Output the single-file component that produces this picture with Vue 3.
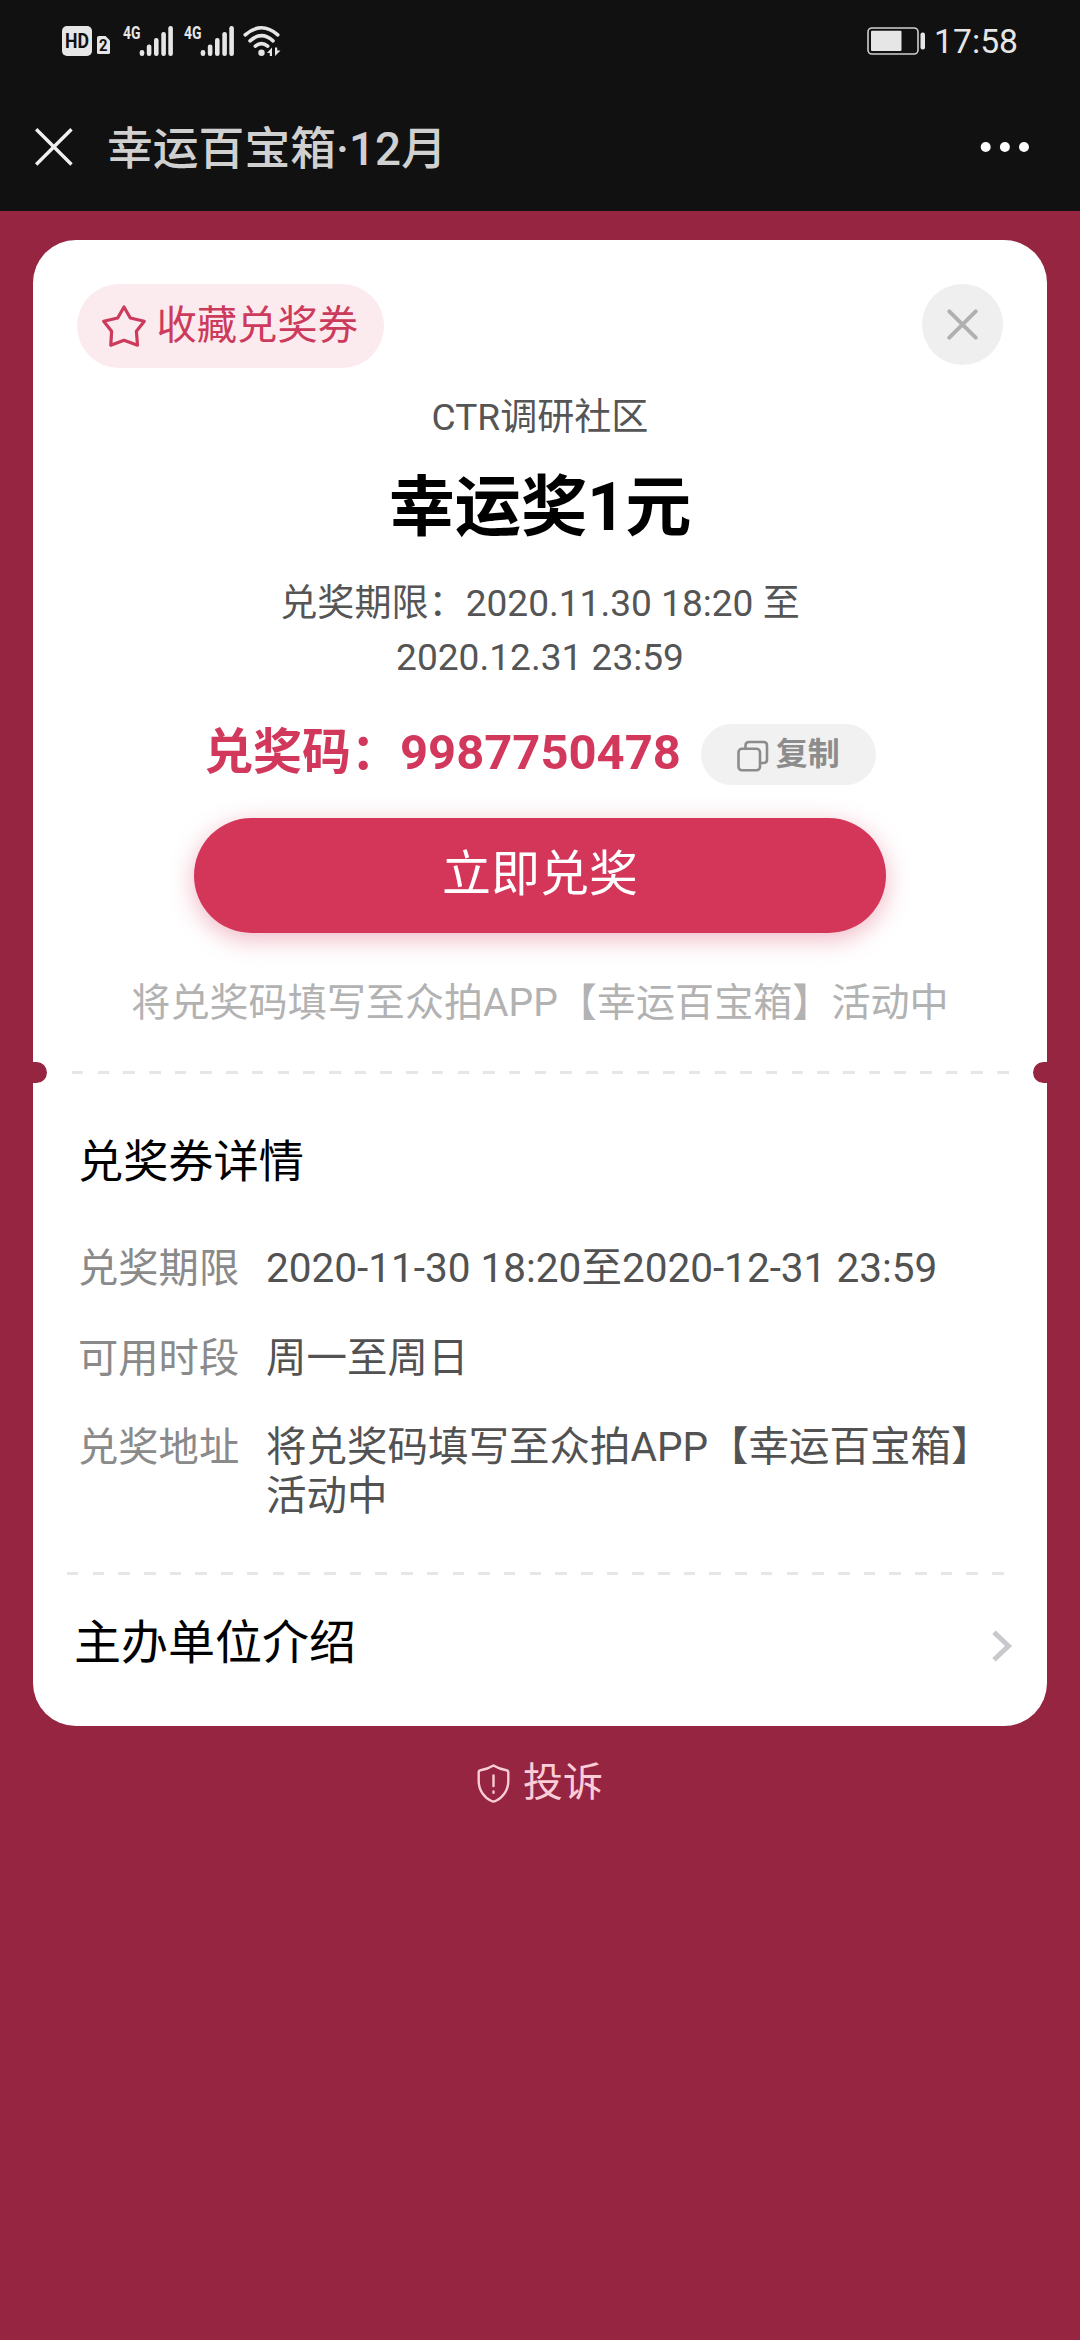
<script setup>
const bars = [
  { x: 2.7, top: 25 },
  { x: 9.8, top: 19.5 },
  { x: 17, top: 13 },
  { x: 24.3, top: 7 },
  { x: 31.3, top: 1 },
]

const details = [
  { label: '兑奖期限', value: '2020-11-30 18:20至2020-12-31 23:59' },
  { label: '可用时段', value: '周一至周日' },
  { label: '兑奖地址', value: '将兑奖码填写至众拍APP【幸运百宝箱】活动中' },
]
</script>

<template>
  <div class="page" lang="zh-CN">
    <header class="top">
      <div class="status">
        <div class="status-left">
          <svg class="hd" width="49" height="40" viewBox="0 -8 49 40">
            <rect x="0" y="1" width="30" height="30" rx="5" fill="#e6e6e6" />
            <text x="3" y="23" textLength="24" lengthAdjust="spacingAndGlyphs" font-size="19.5" font-weight="700" fill="#111">HD</text>
            <path d="M37 11H43.5L48 15.5V27.5Q48 29 46.5 29H36.5Q35 29 35 27.5V13Q35 11 37 11Z" fill="#e6e6e6" />
            <text x="37" y="26.2" textLength="8.5" lengthAdjust="spacingAndGlyphs" font-size="16" font-weight="700" fill="#111">2</text>
          </svg>
          <svg v-for="n in 2" :key="n" class="signal" width="51" height="40" viewBox="0 -8 51 40">
            <text x="0" y="13.6" textLength="17.5" lengthAdjust="spacingAndGlyphs" font-size="18.5" font-weight="700" fill="#e6e6e6">4G</text>
            <rect v-for="b in bars" :key="b.x" :x="b.x + 14" :y="b.top" width="4.6" :height="31 - b.top" rx="2.2" fill="#e6e6e6" />
          </svg>
          <svg class="wifi" width="38" height="40" viewBox="0 -8 38 40" fill="none" stroke="#e6e6e6" stroke-width="3.6" stroke-linecap="round">
            <path d="M2.2 9.8Q18.5 -4.3 34.8 9.8" />
            <path d="M7 15.8Q18.5 5.6 30 15.8" />
            <path d="M12.3 21.2Q18.5 16 24.7 21.2" />
            <circle cx="18.5" cy="27.8" r="3.2" fill="#e6e6e6" stroke="none" />
            <path d="M24 28L29 22.5V31H26.8V28ZM32 22.5H34.2V25.5H37.5L32 31Z" fill="#e6e6e6" stroke="none" />
          </svg>
        </div>
        <div class="status-right">
          <svg width="60" height="28" viewBox="0 0 60 28">
            <rect x="1" y="1" width="50" height="26" rx="4" fill="none" stroke="#cfcfcf" stroke-width="1.6" />
            <rect x="4" y="3.7" width="30.5" height="20.3" rx="1" fill="#e6e6e6" />
            <rect x="53.5" y="5.5" width="4.5" height="17" rx="2" fill="#e6e6e6" />
          </svg>
          <span class="time">17:58</span>
        </div>
      </div>
      <div class="nav">
        <svg class="nav-close" width="38" height="38" viewBox="0 0 38 38">
          <path d="M1.2 1.2L36.5 36.5M36.5 1.2L1.2 36.5" stroke="#f0f0f0" stroke-width="3.4" />
        </svg>
        <h1 class="nav-title">幸运百宝箱·12月</h1>
        <svg class="nav-more" width="50" height="12" viewBox="0 0 50 12" fill="#fff">
          <circle cx="5.7" cy="6" r="5" /><circle cx="24.9" cy="6" r="5" /><circle cx="44" cy="6" r="5" />
        </svg>
      </div>
    </header>

    <main class="card">
      <div class="card-head">
        <button class="collect">
          <svg width="46" height="44" viewBox="0 0 46 44">
            <path d="M23 3L29.3 14L43.3 17.2L35.4 27.3L36.5 41.2L23 36.3L9.8 41.2L10.6 27.3L2.7 17.2L16.7 14Z" fill="none" stroke="#cc3a5c" stroke-width="3.2" stroke-linejoin="round" />
          </svg>
          <span>收藏兑奖券</span>
        </button>
        <button class="close">
          <svg width="31" height="31" viewBox="0 0 31 31">
            <path d="M2.3 2.3L28.7 28.7M28.7 2.3L2.3 28.7" stroke="#b0b0b0" stroke-width="4" stroke-linecap="round" />
          </svg>
        </button>
      </div>

      <p class="org">CTR调研社区</p>
      <h2 class="prize">幸运奖1元</h2>
      <p class="period">兑奖期限：2020.11.30 18:20 至<br />2020.12.31 23:59</p>

      <div class="code-row">
        <span class="code">兑奖码：9987750478</span>
        <button class="copy">
          <svg width="32" height="32" viewBox="0 0 32 32" fill="none" stroke="#8c8c8c" stroke-width="2.6">
            <path d="M8.5 8V5.5Q8.5 2 12 2H26.5Q30 2 30 5.5V19.5Q30 23 26.5 23H23.5" />
            <rect x="1.5" y="8.8" width="21.5" height="21.5" rx="3.5" />
          </svg>
          <span>复制</span>
        </button>
      </div>

      <button class="redeem">立即兑奖</button>
      <p class="hint">将兑奖码填写至众拍APP【幸运百宝箱】活动中</p>

      <div class="tear">
        <i class="notch"></i>
        <i class="dashes"></i>
        <i class="notch"></i>
      </div>

      <h3 class="section">兑奖券详情</h3>
      <dl class="details">
        <div v-for="d in details" :key="d.label" class="detail">
          <dt>{{ d.label }}</dt>
          <dd>{{ d.value }}</dd>
        </div>
      </dl>

      <i class="dashes dashes-low"></i>

      <a class="link">
        <span>主办单位介绍</span>
        <svg width="21" height="32" viewBox="0 0 21 32">
          <path d="M2 2.2L16.5 16L2 29.8" fill="none" stroke="#c8c8cd" stroke-width="5" />
        </svg>
      </a>
    </main>

    <footer class="complain">
      <svg width="33" height="39" viewBox="0 0 33 39" fill="none" stroke="#fbcdd8" stroke-width="2.4" stroke-linejoin="round" stroke-linecap="round">
        <path d="M16.5 1.5Q22.5 5.2 29.5 6.3Q31.3 6.6 31.3 8.5V17C31.3 26 26 33.5 18.5 37Q16.5 38 14.5 37C7 33.5 1.7 26 1.7 17V8.5Q1.7 6.6 3.5 6.3Q10.5 5.2 16.5 1.5Z" />
        <path d="M16.5 11.5V22M16.5 27.5V28.8" />
      </svg>
      <span>投诉</span>
    </footer>
  </div>
</template>

<style>
body {
  margin: 0;
  background: #962542;
}
</style>

<style scoped>
.page {
  width: 1080px;
  height: 2340px;
  overflow: hidden;
  background: #962542;
  font-family: Roboto, "Noto Sans CJK SC", sans-serif;
}
h1, h2, h3, p, dl, dd {
  margin: 0;
}
svg {
  display: block;
  flex: none;
}
button {
  border: 0;
  padding: 0;
  font-family: inherit;
}
.top {
  height: 211px;
  background: #111;
}
.status {
  display: flex;
  justify-content: space-between;
  height: 82px;
  padding: 0 62px;
}
.status-left {
  display: flex;
  padding-top: 17px;
}
.hd + .signal {
  margin-left: 12px;
}
.signal + .signal {
  margin-left: 10px;
}
.wifi {
  margin-left: 8px;
}
.status-right {
  display: flex;
  align-items: center;
  height: 81px;
}
.time {
  margin-left: 7px;
  padding-top: 2px;
  font-size: 33.7px;
  line-height: 40px;
  color: #e6e6e6;
}
.nav {
  display: flex;
  align-items: center;
  height: 129px;
  box-sizing: border-box;
  padding: 0 50px 0 35px;
}
.nav-title {
  margin-left: 34px;
  flex: 1;
  font-size: 45.8px;
  font-weight: 500;
  line-height: 60px;
  padding-top: 7px;
  color: #d0d0d0;
}
.card {
  display: flex;
  flex-direction: column;
  align-items: center;
  box-sizing: border-box;
  height: 1486px;
  margin: 29px 33px 0;
  padding-top: 44px;
  border-radius: 43px;
  background: #fff;
}
.card-head {
  display: flex;
  justify-content: space-between;
  align-self: stretch;
  padding: 0 44px;
}
.collect {
  display: flex;
  align-items: center;
  box-sizing: border-box;
  width: 307px;
  height: 84px;
  padding-left: 24px;
  border-radius: 42px;
  background: #fbeaee;
  color: #cc3a5c;
  font-size: 40.3px;
  line-height: 48px;
}
.collect span {
  margin-left: 9.5px;
  white-space: nowrap;
}
.close {
  display: flex;
  align-items: center;
  justify-content: center;
  width: 81px;
  height: 81px;
  border-radius: 50%;
  background: #efefef;
}
.org {
  margin-top: 30px;
  font-size: 37.1px;
  line-height: 40px;
  color: #555;
}
.prize {
  margin-top: 30px;
  font-size: 66.2px;
  font-weight: 700;
  line-height: 80px;
  color: #000;
}
.period {
  margin-top: 29px;
  font-size: 37.1px;
  line-height: 54px;
  text-align: center;
  color: #555;
}
.code-row {
  display: flex;
  align-items: center;
  height: 61px;
  margin-top: 39px;
}
.code {
  padding-bottom: 3px;
  font-size: 48.96px;
  font-weight: 700;
  line-height: 56px;
  color: #d1385b;
}
.copy {
  display: flex;
  align-items: center;
  justify-content: center;
  width: 175px;
  height: 61px;
  margin-left: 20px;
  border-radius: 31px;
  background: #f1f1f1;
  color: #8c8c8c;
  font-size: 32px;
  font-weight: 700;
  line-height: 40px;
}
.copy svg {
  margin-top: 3px;
}
.copy span {
  margin: 0 0 2px 7px;
}
.redeem {
  width: 692px;
  height: 115px;
  margin-top: 32.5px;
  border-radius: 58px;
  background: #d4365a;
  box-shadow: 0 6px 24px rgba(212, 54, 90, 0.36);
  color: #fff;
  font-size: 48.96px;
  line-height: 60px;
}
.hint {
  margin-top: 50.5px;
  font-size: 39.1px;
  line-height: 40px;
  white-space: nowrap;
  color: #b2b2b2;
}
.tear {
  display: flex;
  align-items: center;
  justify-content: space-between;
  align-self: stretch;
  height: 21px;
  margin-top: 38.5px;
}
.notch {
  width: 14px;
  height: 21px;
  border-radius: 0 10.5px 10.5px 0;
  background: #962542;
}
.notch:last-child {
  border-radius: 10.5px 0 0 10.5px;
}
.dashes {
  width: 937px;
  height: 3px;
  background: repeating-linear-gradient(90deg, #e6e6e6 0 11.5px, transparent 11.5px 25.7px);
}
.section {
  align-self: flex-start;
  margin: 57px 0 0 45px;
  font-size: 45.2px;
  font-weight: 400;
  line-height: 46px;
  color: #000;
}
.details {
  display: flex;
  flex-direction: column;
  gap: 41px;
  align-self: stretch;
  margin-top: 58.5px;
  padding: 0 50px 0 45px;
}
.detail {
  display: flex;
  font-size: 40.3px;
  line-height: 49px;
}
.detail:last-child {
  margin-top: -1px;
}
.detail dt {
  flex: none;
  width: 188px;
  color: #8a8a8a;
}
.detail dd {
  width: 725px;
  font-size: 40.5px;
  color: #525252;
}
.dashes-low {
  margin: 50.5px 9px 0 0;
}
.link {
  display: flex;
  align-items: center;
  justify-content: space-between;
  align-self: stretch;
  height: 136px;
  padding: 0 34px 0 41px;
  font-size: 47px;
  line-height: 56px;
  color: #000;
}
.link svg {
  margin-top: 6px;
}
.complain {
  display: flex;
  align-items: center;
  justify-content: center;
  height: 40px;
  margin-top: 37.5px;
  color: #fbcdd8;
  font-size: 40px;
  line-height: 40px;
}
.complain span {
  margin: 0 0 2px 13px;
}
</style>
